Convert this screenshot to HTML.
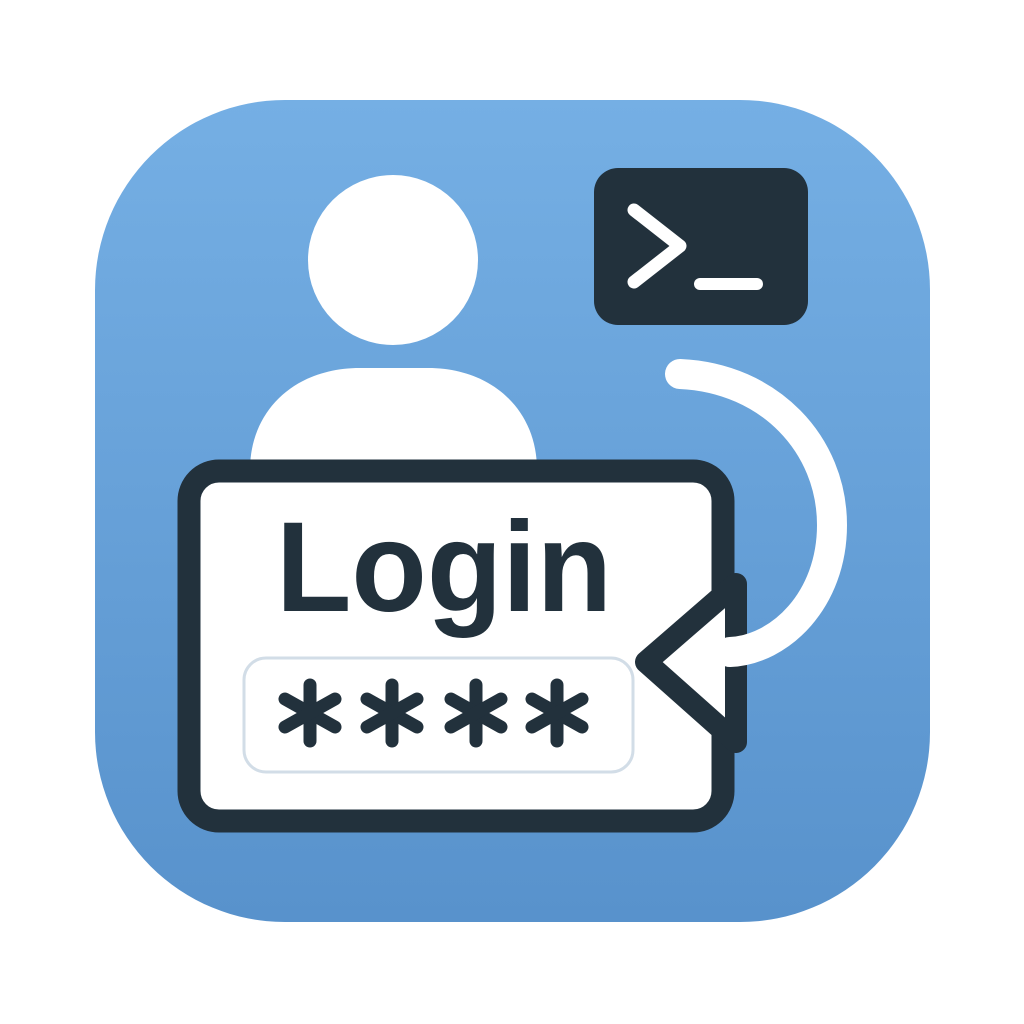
<!DOCTYPE html>
<html><head><style>html,body{margin:0;padding:0;background:#fff;width:1024px;height:1024px;overflow:hidden}</style></head>
<body>
<svg width="1024" height="1024" viewBox="0 0 1024 1024" xmlns="http://www.w3.org/2000/svg">
<defs>
<linearGradient id="bg" x1="0" y1="0" x2="0" y2="1">
<stop offset="0" stop-color="#75afe4"/><stop offset="1" stop-color="#5892cc"/>
</linearGradient>
<g id="ast" stroke="#22313c" stroke-width="13" stroke-linecap="round">
<line x1="0" y1="-28" x2="0" y2="28"/>
<line x1="-25" y1="-14" x2="25" y2="14"/>
<line x1="-25" y1="14" x2="25" y2="-14"/>
</g>
</defs>
<rect x="95" y="100" width="835" height="822" rx="190" fill="url(#bg)"/>
<circle cx="393" cy="260" r="85" fill="#fff"/>
<path d="M250 470 C250 410 295 368 360 368 L428 368 C492 368 537 410 537 470 Z" fill="#fff"/>
<rect x="594" y="168" width="214" height="157" rx="24" fill="#22313c"/>
<polyline points="634,210 680,246 634,282" fill="none" stroke="#fff" stroke-width="13" stroke-linecap="round" stroke-linejoin="round"/>
<line x1="700" y1="284" x2="757" y2="284" stroke="#fff" stroke-width="12" stroke-linecap="round"/>
<rect x="189" y="471" width="534" height="350" rx="30" fill="#fff" stroke="#22313c" stroke-width="23"/>
<text x="276" y="611" font-family="Liberation Sans, sans-serif" font-weight="bold" font-size="128" fill="#22313c" textLength="336" lengthAdjust="spacingAndGlyphs">Login</text>
<rect x="244" y="658" width="389" height="114" rx="22" fill="#fff" stroke="#d2dde7" stroke-width="3"/>
<use href="#ast" x="310" y="713"/>
<use href="#ast" x="392" y="713"/>
<use href="#ast" x="476" y="713"/>
<use href="#ast" x="557" y="713"/>
<path d="M736 584 L646 662 L736 742 Z" fill="#fff" stroke="#22313c" stroke-width="22" stroke-linejoin="round"/>
<path d="M680 374 C770 378 832 445 832 525 C832 600 780 650 730 652" fill="none" stroke="#fff" stroke-width="30" stroke-linecap="round"/>
</svg>
</body></html>
